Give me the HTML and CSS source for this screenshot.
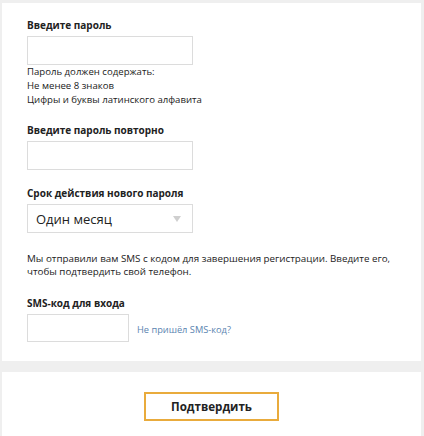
FILE: index.html
```html
<!DOCTYPE html>
<html lang="ru">
<head>
    <meta charset="UTF-8">
    <title>Подтверждение регистрации</title>
    <link rel="stylesheet" href="styles.css">
</head>
<body>
    <div class="card form-card">
        <div class="field">
            <div class="label">Введите пароль</div>
            <div class="input"></div>
            <div class="hint">
                Пароль должен содержать:<br>
                Не менее 8 знаков<br>
                Цифры и буквы латинского алфавита
            </div>
        </div>

        <div class="field">
            <div class="label">Введите пароль повторно</div>
            <div class="input"></div>
        </div>

        <div class="field">
            <div class="label">Срок действия нового пароля</div>
            <div class="input select">
                <span>Один месяц</span>
                <span class="arrow"></span>
            </div>
        </div>

        <p class="note">Мы отправили вам SMS с кодом для завершения регистрации. Введите его, чтобы подтвердить свой телефон.</p>

        <div class="field">
            <div class="label">SMS-код для входа</div>
            <div class="sms-row">
                <div class="input short"></div>
                <a href="#" class="link">Не пришёл SMS-код?</a>
            </div>
        </div>
    </div>

    <div class="card button-card">
        <button class="confirm-btn">Подтвердить</button>
    </div>
</body>
</html>
```

FILE: styles.css
```css
body {
    margin: 0;
    padding: 3px 3px 0 2px;
    background: #efefef;
    font-family: 'Open Sans', 'Noto Sans', sans-serif;
    color: #222;
}
.card {
    background: #fff;
}
.form-card {
    padding: 15px 25px 19px 25px;
}
.field {
    margin-bottom: 16px;
}
.label {
    font-size: 10px;
    font-weight: 700;
    line-height: 14px;
    margin-bottom: 4px;
}
.input {
    box-sizing: border-box;
    width: 166px;
    height: 29px;
    border: 1px solid #dcdcdc;
    background: #fff;
}
.input.short {
    width: 102px;
    height: 28px;
}
.select {
    display: flex;
    align-items: center;
    justify-content: space-between;
    padding: 0 11px 0 8px;
    font-size: 13px;
}
.arrow {
    width: 0;
    height: 0;
    border-left: 4px solid transparent;
    border-right: 4px solid transparent;
    border-top: 6px solid #cfcfcf;
}
.hint {
    font-size: 9.6px;
    line-height: 14px;
}
.note {
    font-size: 9.8px;
    line-height: 13px;
    margin: 19px 0 18px;
}
.field:last-child {
    margin-bottom: 0;
}
.sms-row {
    display: flex;
    align-items: center;
    gap: 8px;
}
.link {
    font-size: 9.25px;
    color: #5a84b0;
    text-decoration: none;
    margin-top: 3px;
}
.button-card {
    margin-top: 11px;
    padding: 20px 0 16px;
    text-align: center;
}
.confirm-btn {
    width: 135px;
    height: 29px;
    background: #fff;
    border: 2px solid #e9ab3c;
    font-family: inherit;
    font-size: 11.6px;
    font-weight: 700;
    color: #222;
    cursor: pointer;
}
```
